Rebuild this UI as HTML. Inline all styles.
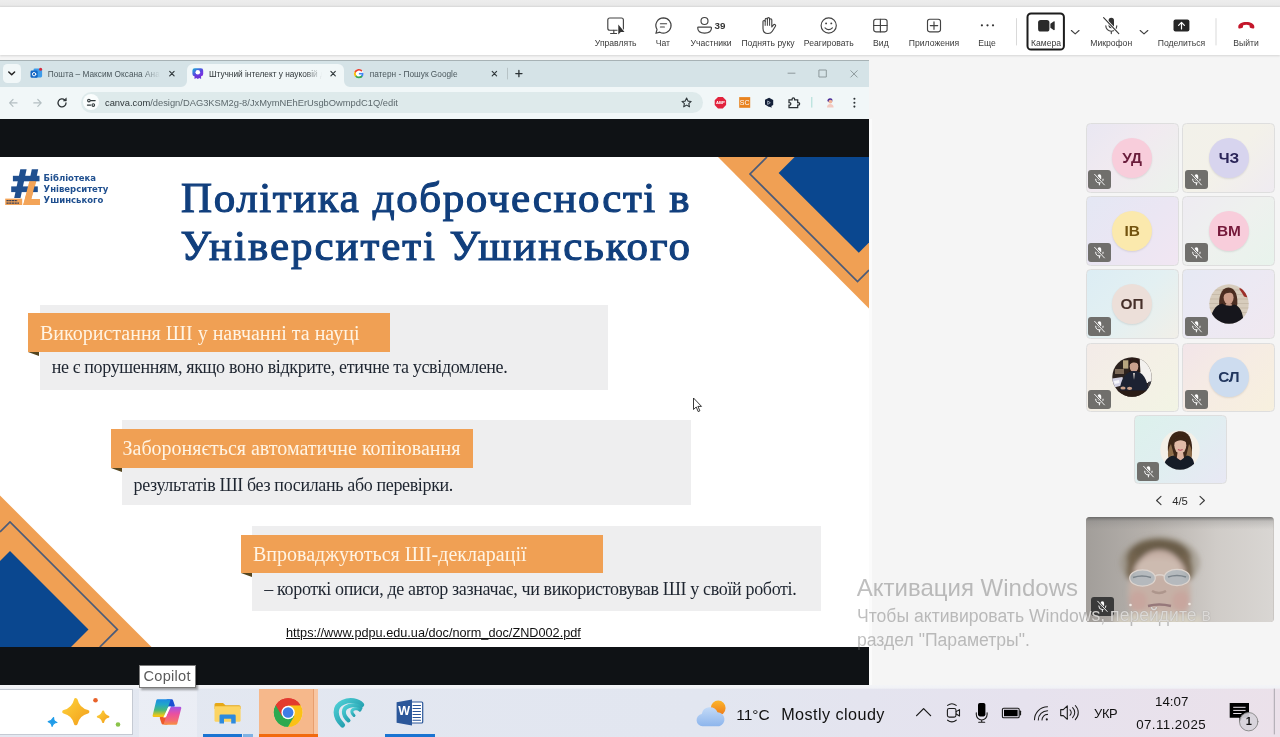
<!DOCTYPE html>
<html lang="uk">
<head>
<meta charset="utf-8">
<title>Meeting</title>
<style>
*{box-sizing:border-box;margin:0;padding:0}
html,body{width:1280px;height:737px;overflow:hidden}
body{position:relative;background:#f5f5f5;will-change:transform;font-family:"Liberation Sans",sans-serif;color:#242424}
.abs{position:absolute}
/* top strips */
#strip0{left:0;top:0;width:1280px;height:7.500px;background:linear-gradient(180deg,#ededed 0,#e9e9e9 5px,#dddddd 6.500px,#ececec 7.500px)}
#tbar{left:0;top:7px;width:1280px;height:47.500px;background:#fff;box-shadow:0 1px 2px rgba(0,0,0,.13)}
.tb{position:absolute;top:29px;font-size:8.6px;color:#3a3a3a;white-space:nowrap;transform:translateX(-50%);line-height:14px}
.ti{position:absolute;top:13px;width:24px;height:24px;transform:translateX(-50%)}
/* browser */
#win{left:0;top:60px;width:869px;height:625px;background:#0f1215;overflow:hidden}
#tabs{left:0;top:0;width:869px;height:27px;background:#d5e3e7}
#nav{left:0;top:27px;width:869px;height:32px;background:#f1f7f8}
#slide{left:0;top:97px;width:869px;height:490px;background:#fff;overflow:hidden;font-family:"Liberation Serif",serif}
/* taskbar */
#task{left:0;top:685px;width:1280px;height:52px;background:linear-gradient(90deg,#e3e8f1 0%,#e2e6f0 55%,#e6e2ee 80%,#ebe1ea 100%)}

.ttl{font-weight:normal;-webkit-text-stroke:1.150px #113f7d;font-size:43px;line-height:50px;color:#113f7d;white-space:nowrap}
.lg{font-family:"DejaVu Sans","Liberation Sans",sans-serif;font-weight:bold;font-size:8.500px;line-height:11px;color:#1f4f8f;white-space:nowrap}
.box{background:#eeeeef}
.ban{background:#f0a054;color:#fff4e4;font-size:20px;line-height:39px;padding-left:12px;white-space:nowrap}
.fold{width:0;height:0;border-style:solid;border-width:0 11.500px 4.500px 0;border-color:transparent #54451f transparent transparent}
.par{font-size:18px;letter-spacing:-0.35px;line-height:22px;color:#1e2530;white-space:nowrap}
.tt{top:7.900px;font-size:8.300px;line-height:12px;white-space:nowrap;overflow:hidden;-webkit-mask-image:linear-gradient(90deg,#000 85%,transparent 100%);mask-image:linear-gradient(90deg,#000 85%,transparent 100%)}
.tile{position:absolute;width:93px;height:69.600px;border-radius:4.500px;border:1px solid #dedede;overflow:hidden}
.av{position:absolute;left:25.600px;top:13.600px;width:40px;height:40px;border-radius:20px;font-weight:bold;font-size:15.400px;line-height:40px;text-align:center;box-shadow:0 1px 2px rgba(0,0,0,.10)}
.ph{position:absolute;left:25.600px;top:13.600px;width:40px;height:40px}
.mb{position:absolute;left:1.700px;top:46.200px;width:22.600px;height:19px;background:#706f6c;border-radius:3px}
.wm{color:rgba(110,110,110,.44);white-space:nowrap}
.tk{color:#111;white-space:nowrap;line-height:18px}
</style>
</head>
<body>
<div id="strip0" class="abs"></div>
<div id="tbar" class="abs"><!--TBAR-->
<svg class="abs" style="left:0;top:0" width="1280" height="47" viewBox="0 7 1280 47" fill="none" stroke="#424242" stroke-width="1.15" stroke-linecap="round" stroke-linejoin="round">
  <!-- manage -->
  <rect x="607.8" y="18" width="15.6" height="12.2" rx="2"/>
  <path d="M613.8 30.3V33.2M610.6 33.5h6"/>
  <path d="M618.3 24.6v10l2.5-2.6h3.7z" fill="#333" stroke="#fff" stroke-width="1.6" paint-order="stroke"/>
  <!-- chat -->
  <path d="M663.5 17.9a7.6 7.6 0 1 1-3.7 14.25l-3.9 1.15 1.15-3.8a7.6 7.6 0 0 1 6.45-11.6z"/>
  <path d="M660.4 23.7h6.2M660.4 27h4"/>
  <!-- people -->
  <circle cx="704.5" cy="21" r="3.5"/>
  <path d="M698.4 27.1h12.4a.7.7 0 0 1 .7.7c0 3.3-2.9 5.3-6.9 5.3s-6.9-2-6.9-5.3a.7.7 0 0 1 .7-.7z"/>
  <!-- hand -->
  <path d="M763 27.5V21.6a1.1 1.1 0 0 1 2.2 0V19.4a1.1 1.1 0 0 1 2.2 0V18.7a1.1 1.1 0 0 1 2.2 0v1.2a1.1 1.1 0 0 1 2.2 0V27l1.7-2.1a1.15 1.15 0 0 1 1.9 1.3l-3.1 5c-1 1.6-2.5 2.3-4.3 2.3c-3 0-5-2-5-5z"/>
  <path d="M765.2 21.6V25.4M767.4 19.4V25.4M769.6 19.9V25.4" stroke-width="1"/>
  <!-- smile -->
  <circle cx="828.7" cy="25.5" r="7.6"/>
  <circle cx="826.1" cy="23.4" r=".95" fill="#424242" stroke="none"/>
  <circle cx="831.3" cy="23.4" r=".95" fill="#424242" stroke="none"/>
  <path d="M825 27.8q3.7 3.5 7.4 0"/>
  <!-- grid -->
  <rect x="873.7" y="19.2" width="13.4" height="12.6" rx="2.2"/>
  <path d="M880.4 19.2v12.6M873.7 25.5h13.4"/>
  <!-- apps -->
  <rect x="927.5" y="19.2" width="13" height="12.6" rx="2.2"/>
  <path d="M934 21.9v7.4M930.3 25.6h7.4"/>
  <!-- more -->
  <g fill="#333" stroke="none"><circle cx="981.9" cy="25.3" r="1.1"/><circle cx="987.5" cy="25.3" r="1.1"/><circle cx="993" cy="25.3" r="1.1"/></g>
  <!-- separators -->
  <path d="M1016.5 18.6V45M1216 18.6V45" stroke="#d9d9d9" stroke-width="1"/>
  <!-- camera -->
  <rect x="1027.5" y="13.4" width="36.4" height="36.2" rx="3.6" stroke="#1c1c1c" stroke-width="2"/>
  <rect x="1038.1" y="19.9" width="11.3" height="11.6" rx="2.6" fill="#2a2a2a" stroke="none"/>
  <path d="M1050.4 23.7l3.2-2.3a.7.7 0 0 1 1.1.6v7.4a.7.7 0 0 1-1.1.6l-3.2-2.3z" fill="#2a2a2a" stroke="none"/>
  <!-- chevrons -->
  <path d="M1071.4 30.5l3.8 3.4 3.8-3.4M1140.2 30.5l3.8 3.4 3.8-3.4"/>
  <!-- mic off -->
  <rect x="1108.6" y="17.8" width="5.4" height="10.4" rx="2.7" fill="#333" stroke="none"/>
  <path d="M1105.8 25.7a5.5 5.5 0 0 0 11 0M1111.3 31.2V33.6"/>
  <path d="M1103.6 17.6l15.2 16" stroke="#fff" stroke-width="2.8"/>
  <path d="M1103.6 17.6l15.2 16" stroke="#333" stroke-width="1.1"/>
  <!-- share -->
  <rect x="1173.5" y="19.5" width="15.9" height="12" rx="2" fill="#262626" stroke="none"/>
  <path d="M1181.5 22.6V29M1178.6 25.3l2.9-2.9 2.9 2.9" stroke="#fff" stroke-width="1.2"/>
  <!-- leave -->
  <path d="M1238.3 26.6c0-2.8 3.6-4.6 8-4.6s8 1.8 8 4.6v.8c0 .8-.7 1.3-1.5 1.1l-2.2-.5c-.6-.15-1-.7-1-1.3v-1.3c-1-.45-2.1-.6-3.3-.6s-2.3.15-3.3.6v1.3c0 .6-.4 1.15-1 1.3l-2.2.5c-.8.2-1.5-.3-1.5-1.100z" fill="#c4162a" stroke="none"/>
</svg>
<span class="tb" style="left:719.900px;top:11.800px;font-weight:bold;font-size:9.800px;color:#333">39</span>
<span class="tb" id="l1" style="left:615.7px">Управлять</span>
<span class="tb" id="l2" style="left:662.9px">Чат</span>
<span class="tb" id="l3" style="left:711px">Участники</span>
<span class="tb" id="l4" style="left:768px">Поднять руку</span>
<span class="tb" id="l5" style="left:828.8px">Реагировать</span>
<span class="tb" id="l6" style="left:880.9px">Вид</span>
<span class="tb" id="l7" style="left:934px">Приложения</span>
<span class="tb" id="l8" style="left:987px">Еще</span>
<span class="tb" id="l9" style="left:1046.1px">Камера</span>
<span class="tb" id="l10" style="left:1111.2px">Микрофон</span>
<span class="tb" id="l11" style="left:1181.5px">Поделиться</span>
<span class="tb" id="l12" style="left:1246px">Выйти</span>
<!--/TBAR--></div>

<div id="win" class="abs">
  <div id="tabs" class="abs"><!--TABS-->
<div class="abs" style="left:0;top:0;width:869px;height:1px;background:#a7b2b5"></div>
<div class="abs" style="left:3.4px;top:4.3px;width:17.2px;height:18.7px;border-radius:4.5px;background:#f1f7f8"></div>
<!-- active tab -->
<div class="abs" style="left:187px;top:4.3px;width:157px;height:23px;border-radius:6px 6px 0 0;background:#f1f7f8"></div>
<svg class="abs" style="left:0;top:0" width="869" height="27" viewBox="0 60 869 27" fill="none" stroke-linecap="round" stroke-linejoin="round">
  <path d="M181 87a6 6 0 0 0 6-6v6zM350 87a6 6 0 0 1-6-6v6z" fill="#f1f7f8"/>
  <path d="M8.800 72l2.9 2.800 2.900-2.800" stroke="#222" stroke-width="1.5"/>
  <!-- tab1 favicon -->
  <rect x="33.5" y="68.6" width="8.600" height="8.800" rx="1.3" fill="#3d9be9"/>
  <rect x="30.5" y="70.6" width="7.200" height="7.200" rx="1.4" fill="#1266c4"/>
  <circle cx="34.1" cy="74.2" r="1.7" stroke="#fff" stroke-width="1"/>
  <circle cx="40.6" cy="69.2" r="1.5" fill="#d6293a"/>
  <!-- close x -->
  <g stroke="#30383b" stroke-width="1.15"><path d="M169.700 71.300l4.400 4.500M174.100 71.300l-4.400 4.500M330.900 71.300l4.400 4.500M335.300 71.300l-4.400 4.500M492.200 71.300l4.400 4.500M496.600 71.300l-4.400 4.500"/></g>
  <!-- tab2 favicon -->
  <defs><linearGradient id="cv" x1="0" y1="0" x2="1" y2="1"><stop offset="0" stop-color="#18b4d8"/><stop offset=".55" stop-color="#5a46e0"/><stop offset="1" stop-color="#8a2be2"/></linearGradient></defs>
  <rect x="192.400" y="68.300" width="10.800" height="8" rx="2.400" fill="url(#cv)"/>
  <path d="M194.500 75.500v3.600l1.800-1.100 1.500 1.100 1.500-1.100 1.800 1.100v-3.600z" fill="#6a35d8"/>
  <circle cx="197.800" cy="72.300" r="2.300" fill="#fff"/>
  <!-- google G -->
  <circle cx="358.700" cy="73.600" r="4.700" fill="#fff"/>
  <path d="M362.700 73.700a4 4 0 0 1-1.300 2.900" stroke="#4285f4" stroke-width="1.700"/>
  <path d="M361.500 76.500a4 4 0 0 1-5.900-.8" stroke="#34a853" stroke-width="1.700"/>
  <path d="M355.500 75.700a4 4 0 0 1 0-4.200" stroke="#fbbc05" stroke-width="1.700"/>
  <path d="M355.500 71.500a4 4 0 0 1 5.900-.8" stroke="#ea4335" stroke-width="1.700"/>
  <path d="M358.900 73.700h3.800" stroke="#4285f4" stroke-width="1.600" stroke-linecap="butt"/>
  <!-- sep + plus -->
  <path d="M507.500 68.200v10.800" stroke="#b7c3c6" stroke-width="1"/>
  <path d="M515.800 73.600h6.200M518.900 70.500v6.200" stroke="#2c3336" stroke-width="1.300"/>
  <!-- window controls -->
  <g stroke="#8d999c" stroke-width="1"><path d="M788 73.200h7"/><rect x="819.300" y="70" width="7" height="7"/><path d="M850.800 70.700l6.400 6.400M857.200 70.700l-6.400 6.400"/></g>
</svg>
<span id="tt1" class="abs tt" style="left:47.700px;width:112px;color:#4b585d">Пошта – Максим Оксана Анатол</span>
<span id="tt2" class="abs tt" style="left:208.900px;width:113px;color:#2e3538">Штучний інтелект у науковій ді</span>
<span id="tt3" class="abs tt" style="left:369.700px;width:100px;color:#4b585d">патерн - Пошук Google</span>
<!--/TABS--></div>
  <div id="nav" class="abs"><!--NAV-->
<div class="abs" style="left:80.500px;top:4.500px;width:622px;height:21.500px;border-radius:11px;background:#deeaeb"></div>
<div class="abs" style="left:83.400px;top:7.300px;width:16px;height:16px;border-radius:8px;background:#fafdfd"></div>
<svg class="abs" style="left:0;top:0" width="869" height="32" viewBox="0 87 869 32" fill="none" stroke-linecap="round" stroke-linejoin="round">
  <g stroke="#b4bfc2" stroke-width="1.200"><path d="M17 102.900H9.800M13 99.500l-3.400 3.400 3.400 3.400"/><path d="M33.800 102.900H41M37.800 99.500l3.400 3.400-3.400 3.400"/></g>
  <path d="M66 102.900a4 4 0 1 1-1.300-2.950" stroke="#2b3134" stroke-width="1.300"/>
  <path d="M66.300 98.300v2.600h-2.600z" fill="#2b3134" stroke="#2b3134" stroke-width=".6"/>
  <!-- tune icon -->
  <g stroke="#30383b" stroke-width="1.100"><path d="M90.600 100.600h4.600M87.400 105.100h3.200"/><circle cx="88.900" cy="100.600" r="1.300"/><circle cx="93.300" cy="105.100" r="1.300"/></g>
  <!-- star -->
  <path d="M686.600 98.100l1.400 3 3.200.35-2.400 2.150.7 3.200-2.900-1.700-2.900 1.700.7-3.200-2.400-2.150 3.200-.35z" stroke="#30383b" stroke-width="1.100"/>
  <!-- ABP -->
  <path d="M718 97h4.800l3.300 3.300v4.800l-3.300 3.300H718l-3.300-3.300v-4.800z" fill="#e2233d"/>
  <!-- SC -->
  <rect x="739.200" y="97.100" width="11" height="10.700" fill="#e8831f"/>
  <!-- hex -->
  <path d="M769.100 97.700l4.100 2.400v4.800l-1.800 1.100.3 1.700-2-1-.6.300-4.100-2.400v-4.800z" fill="#132039"/>
  <path d="M768 101.200l2.300 1.500-2.300 1.500z" stroke="#cfd8e6" stroke-width=".7"/>
  <!-- puzzle -->
  <path d="M789 99.800h3.100v-.7a1.250 1.250 0 0 1 2.500 0v.7h3.100v2.700h.7a1.250 1.250 0 0 1 0 2.500h-.7v2.600h-8.700v-2.600h.6a1.250 1.250 0 0 0 0-2.500h-.6z" stroke="#2b3134" stroke-width="1.250" stroke-linejoin="miter"/>
  <path d="M811.800 97.400v9.800" stroke="#a9dcd5" stroke-width="1"/>
  <!-- avatar -->
  <path d="M827.300 100.500a2.800 2.800 0 0 1 5.200-.8l-.4 2.400h-4z" fill="#4b2f9a"/>
  <circle cx="830.400" cy="101.600" r="1.900" fill="#f0b49a"/>
  <path d="M827 107.500c0-2.300 1.300-3.500 3.300-3.500s3.300 1.200 3.300 3.500z" fill="#f3c9c0"/>
  <!-- kebab -->
  <g fill="#2b3134"><circle cx="854.400" cy="98.800" r="1.050"/><circle cx="854.400" cy="102.700" r="1.050"/><circle cx="854.400" cy="106.600" r="1.050"/></g>
</svg>
<span class="abs" style="left:714.700px;top:12.700px;width:11.400px;text-align:center;font-size:4.200px;line-height:6px;font-weight:bold;color:#fff;letter-spacing:-.1px">ABP</span>
<span class="abs" style="left:739.200px;top:11.300px;width:11px;text-align:center;font-size:7px;line-height:9px;color:#fff">SC</span>
<span id="url" class="abs" style="left:105px;top:9.500px;font-size:9.350px;line-height:13px;color:#30383b;white-space:nowrap">canva.com<span style="color:#5d696d">/design/DAG3KSM2g-8/JxMymNEhErUsgbOwmpdC1Q/edit</span></span>
<!--/NAV--></div>
  <div id="slide" class="abs"><!--SLIDE-->
<svg class="abs" style="left:0;top:0" width="869" height="490" viewBox="0 0 869 490">
  <polygon points="718,0 869,0 869,151.5" fill="#f0a054"/>
  <polygon points="794.6,0 869,0 869,85.6 858.8,95.8 778.6,16" fill="#0a478f"/>
  <polyline points="767,0 750,17 857.5,124.5 869,113" fill="none" stroke="#4a5b7a" stroke-width="1.700"/>
  <polygon points="0,338.5 151.5,490 0,490" fill="#f0a054"/>
  <polygon points="0,404 10,394 88.5,472.5 71,490 0,490" fill="#0a478f"/>
  <polyline points="0,375 10,365 117.4,472.4 99.8,490" fill="none" stroke="#4a5b7a" stroke-width="1.700"/>
</svg>
<!-- logo -->
<div id="logo" class="abs" style="left:0;top:0">
  <svg class="abs" style="left:0;top:0" width="46" height="54" viewBox="0 157 46 54">
    <polygon points="31.400,177 37.600,177 31.300,199 39.900,199 39.900,205 23.200,205 " fill="#f3a458"/>
    <g fill="#1f4f8f">
      <polygon points="20.300,169.300 26.600,169.300 20.500,198 14.200,198"/>
      <polygon points="31.800,169.300 38.200,169.300 36.600,177 30.200,177"/>
      <rect x="12.900" y="175.800" width="26.600" height="5.500"/>
      <rect x="11.200" y="186.400" width="26.600" height="5.700"/>
    </g>
    <polygon points="30.200,177 36.600,177 35.700,181.300 29.300,181.300" fill="#1f4f8f"/>
    <polygon points="29.300,181.300 35.700,181.300 31.300,199 39.900,199 39.900,205 23.200,205" fill="#f3a458"/>
    <rect x="27" y="186.400" width="10.800" height="5.700" fill="#1f4f8f" opacity=".0"/>
    <rect x="5.200" y="198.600" width="17" height="6.400" fill="#f3a458"/>
    <path d="M6.500 200.600h11M6.500 203.100h12.500" stroke="#3a3f55" stroke-width="1.100" stroke-dasharray="2.200 .5"/>
  </svg>
  <div id="lg1" class="abs lg" style="left:43.600px;top:15.500px">Бібліотека</div>
  <div id="lg2" class="abs lg" style="left:43.600px;top:26.700px">Університету</div>
  <div id="lg3" class="abs lg" style="left:43.600px;top:37.500px">Ушинського</div>
</div>
<div id="t1" class="abs ttl" style="left:181px;top:15.500px;letter-spacing:1.6px">Політика доброчесності в</div>
<div id="t2" class="abs ttl" style="left:180.500px;top:63.500px;letter-spacing:1.95px">Університеті Ушинського</div>

<div class="abs box" style="left:39.5px;top:147.5px;width:568.5px;height:85px"></div>
<div class="abs fold" style="left:28px;top:195px"></div>
<div class="abs ban" style="left:28px;top:155.5px;width:362px;height:39.5px"><span id="b1" style="position:relative;top:1px">Використання ШІ у навчанні та науці</span></div>
<div id="p1" class="abs par" style="left:51.7px;top:199px">не є порушенням, якщо воно відкрите, етичне та усвідомлене.</div>

<div class="abs box" style="left:122px;top:263px;width:568.5px;height:85px"></div>
<div class="abs fold" style="left:110.5px;top:310.5px"></div>
<div class="abs ban" style="left:110.5px;top:271.5px;width:362px;height:39px"><span id="b2">Забороняється автоматичне копіювання</span></div>
<div id="p2" class="abs par" style="left:133.500px;top:316.500px">результатів ШІ без посилань або перевірки.</div>

<div class="abs box" style="left:251.5px;top:368.5px;width:569px;height:85px"></div>
<div class="abs fold" style="left:241px;top:416px"></div>
<div class="abs ban" style="left:241px;top:377.5px;width:361.5px;height:38.5px"><span id="b3">Впроваджуються ШІ-декларації</span></div>
<div id="p3" class="abs par" style="left:264.3px;top:421px">– короткі описи, де автор зазначає, чи використовував ШІ у своїй роботі.</div>

<div id="lnk" class="abs" style="left:286px;top:468px;font-family:'Liberation Sans',sans-serif;font-size:12.7px;color:#111;text-decoration:underline;white-space:nowrap;line-height:16px">https://www.pdpu.edu.ua/doc/norm_doc/ZND002.pdf</div>
<!--/SLIDE--></div>
</div>

<div class="abs" style="left:869px;top:119px;width:2.500px;height:566px;background:#fbfbfb"></div>
<div id="panel"><!--PANEL-->
<svg width="0" height="0" style="position:absolute"><defs>
<symbol id="mo" viewBox="0 0 22 19"><g fill="none" stroke="#fff" stroke-linecap="round" stroke-width="1"><rect x="9.300" y="4.300" width="3.600" height="6.600" rx="1.800" fill="#fff" stroke="none"/><path d="M7.400 9.200a3.700 3.700 0 0 0 7.400 0M11.100 13v1.900"/><path d="M6.300 4.300l9.800 10.600" stroke="#706f6c" stroke-width="2.400"/><path d="M6.300 4.300l9.800 10.600" stroke-width=".9"/></g></symbol>
<clipPath id="cc"><circle cx="20" cy="20" r="19.700"/></clipPath>
<filter id="fb1" x="-20%" y="-20%" width="140%" height="140%"><feGaussianBlur stdDeviation=".7"/></filter>
<filter id="fb2" x="-20%" y="-20%" width="140%" height="140%"><feGaussianBlur stdDeviation="1.600"/></filter>
<filter id="fb3" x="-20%" y="-20%" width="140%" height="140%"><feGaussianBlur stdDeviation="2.400"/></filter>
</defs></svg>
<div class="tile" style="left:1085.500px;top:123.200px;background:linear-gradient(135deg,#e9e7f2 0%,#f1eaf0 45%,#ecf2ec 100%)"><div class="av" style="background:#f8cddb;color:#6a1d3b">УД</div><svg class="mb"><use href="#mo"/></svg></div>
<div class="tile" style="left:1182.300px;top:123.200px;background:linear-gradient(135deg,#f2f1ea 0%,#f3f1e9 50%,#efebf1 100%)"><div class="av" style="background:#d7d4ee;color:#2a2458">ЧЗ</div><svg class="mb"><use href="#mo"/></svg></div>
<div class="tile" style="left:1085.500px;top:196.300px;background:linear-gradient(135deg,#e4e7f4 0%,#ebe6f3 55%,#f1e6f2 100%)"><div class="av" style="background:#fbe9ad;color:#73540f">ІВ</div><svg class="mb"><use href="#mo"/></svg></div>
<div class="tile" style="left:1182.300px;top:196.300px;background:linear-gradient(135deg,#eeebf2 0%,#eef1ee 50%,#e8f3ec 100%)"><div class="av" style="background:#f8cddb;color:#75193a">ВМ</div><svg class="mb"><use href="#mo"/></svg></div>
<div class="tile" style="left:1085.500px;top:269.400px;background:linear-gradient(135deg,#dcedf4 0%,#e3f0f2 50%,#f1efe8 100%)"><div class="av" style="background:#ecdfd9;color:#46302a">ОП</div><svg class="mb"><use href="#mo"/></svg></div>
<div class="tile" style="left:1182.300px;top:269.400px;background:linear-gradient(135deg,#e6e9f4 0%,#ece9f3 50%,#f0e8f0 100%)">
  <svg class="ph" viewBox="0 0 40 40"><g clip-path="url(#cc)"><rect width="40" height="40" fill="#d7ccbc"/><g stroke="#c0b3a2" stroke-width=".7"><path d="M0 6h40M0 10.500h40M0 15h40M0 19.500h40M0 24h40M0 28.500h40"/></g><g filter="url(#fb1)"><path d="M30 4.500l3.500-.5 3.500 4.500 1.500 5-3.500-1-2-3.500z" fill="#9c2f2b"/><path d="M10.500 24c-1.500-10 1.500-20.500 9-20.500 7 0 10 9 8.500 19.500l-3 3.500H13z" fill="#4b2d20"/><ellipse cx="19.600" cy="13.600" rx="5" ry="6.600" fill="#cd9f8b"/><path d="M14.800 11c.8-4 3-5.500 5.300-5.500 2 0 4 1.300 4.700 5-2-2.300-7-2.600-10 .5z" fill="#4b2d20"/><path d="M17 19.500h5.500l1 4h-7.500z" fill="#c59a88"/><path d="M1.500 40c0-12 5-19.500 12-20.500 3 2.500 8.500 3 11.500 1 6 1.500 9.500 8 9.500 19.500z" fill="#18181c"/></g></g></svg>
  <svg class="mb"><use href="#mo"/></svg></div>
<div class="tile" style="left:1085.500px;top:342.500px;background:linear-gradient(135deg,#f3ebe8 0%,#f4f0e6 50%,#f2f4e4 100%)">
  <svg class="ph" viewBox="0 0 40 40"><g clip-path="url(#cc)"><rect width="40" height="40" fill="#2c221e"/><g filter="url(#fb1)"><rect x="27.500" y="0" width="13" height="26" fill="#f3f1ee"/><rect x="11" y="3.300" width="5.300" height="8.300" fill="#b8a57f"/><rect x="3" y="12" width="9" height="5" fill="#7d6a58"/><path d="M0 21.500l10.500-1.500 1.500 8-12 3z" fill="#d4d3e4"/><path d="M2 24l5-1 .5 3-5 1z" fill="#f6f6fa"/><path d="M17 1.500h10.500l1 14H17z" fill="#2a1a16"/><ellipse cx="22" cy="9.500" rx="4.300" ry="5.800" fill="#caa18d"/><path d="M17.400 7.500c0-4 2-6 4.800-6 2.700 0 4.800 2 4.500 6-1.800-2.600-6.500-2.800-9.300 0z" fill="#2a1a16"/><path d="M7.500 35c1-13 6-21 14.500-21s14 8 14 21z" fill="#1c2230"/><path d="M21 16l1 7 1-7z" fill="#c9c4c0"/><path d="M0 33.500h36v7H0z" fill="#2a1c18"/><ellipse cx="11" cy="31" rx="2.600" ry="1.600" fill="#c9a08a"/><ellipse cx="17.600" cy="31.300" rx="2.600" ry="1.600" fill="#c9a08a"/><path d="M36 25l4-1v9l-4 1z" fill="#3a3a42"/></g></g></svg>
  <svg class="mb"><use href="#mo"/></svg></div>
<div class="tile" style="left:1182.300px;top:342.500px;background:linear-gradient(135deg,#f2e5e9 0%,#f6ece3 50%,#f7f0de 100%)"><div class="av" style="background:#cddcef;color:#21365e">СЛ</div><svg class="mb"><use href="#mo"/></svg></div>
<div class="tile" style="left:1133.900px;top:415px;height:68.700px;background:linear-gradient(135deg,#dcf1ec 0%,#e0eef0 50%,#e8e8f4 100%)">
  <svg class="ph" viewBox="0 0 40 40"><g clip-path="url(#cc)"><rect width="40" height="40" fill="#f4f0e8"/><g filter="url(#fb1)"><path d="M9 27c-2.500-9-1-20 5-24 5-3 12.500-2 15.500 3.500 3.500 7 3 15 1 23l-4 4H12z" fill="#3c2519"/><path d="M8.500 28c-1.500-6 .5-11 2.500-14l3.500 13zM31.500 28c1.500-6-.5-11-2.500-14l-3 13z" fill="#8d6c49"/><path d="M10 30c0-3 1.500-5 3-6l1.500 6zM30.500 31c0-3-1.500-5-3-6l-1 6z" fill="#a88560"/><ellipse cx="20.300" cy="15.300" rx="6" ry="8.400" fill="#e2baa6"/><path d="M14.300 13c.5-5 3-7.500 6.300-7.500 3 0 5.500 2.500 5.700 7-2.500-3-8.500-3.500-12 .5z" fill="#3c2519"/><path d="M18 19.600q2.300 1.300 4.600 0" stroke="#b5485a" stroke-width="1.100" fill="none"/><path d="M17.500 22.500h5.500l1.500 8h-8z" fill="#dcb29e"/><path d="M3.500 40c0-9 4-13.500 10-14.500l7 5 6.500-5c6 1 7.500 5.500 7.500 14.500z" fill="#141a26"/></g></g></svg>
  <svg class="mb"><use href="#mo"/></svg></div>
<!-- pager -->
<svg class="abs" style="left:1150px;top:492px" width="60" height="17" viewBox="1150 492 60 17" fill="none" stroke="#3a3a3a" stroke-width="1.100" stroke-linecap="round" stroke-linejoin="round"><path d="M1161 496.300l-4.400 4.200 4.400 4.200M1200 496.300l4.400 4.200-4.400 4.200"/></svg>
<span id="pg" class="abs" style="left:1172.200px;top:493.500px;font-size:11.300px;line-height:14px;color:#2b2b2b">4/5</span>
<!-- self video -->
<div class="abs" style="left:1086.200px;top:516.800px;width:187.600px;height:105.600px;border-radius:4px;overflow:hidden;background:#b5b0ab;z-index:2">
  <svg class="abs" style="left:0;top:0" width="187.600" height="105.600" viewBox="0 0 187.600 105.600">
    <defs><linearGradient id="wl" x1="0" y1="0" x2="1" y2="0"><stop offset="0" stop-color="#a29e9a"/><stop offset=".35" stop-color="#b7b2ad"/><stop offset=".7" stop-color="#d0ccc8"/><stop offset="1" stop-color="#d9d6d3"/></linearGradient>
    <linearGradient id="wt" x1="0" y1="0" x2="0" y2="1"><stop offset="0" stop-color="#555" stop-opacity=".75"/><stop offset=".04" stop-color="#777" stop-opacity=".25"/><stop offset=".12" stop-color="#888" stop-opacity="0"/></linearGradient></defs>
    <rect width="187.600" height="105.600" fill="url(#wl)"/>
    <g filter="url(#fb3)">
      <ellipse cx="74" cy="46" rx="40" ry="27" fill="#8f8574" opacity=".5"/>
      <ellipse cx="73" cy="42" rx="32" ry="20" fill="#6b5d48"/>
      <ellipse cx="73.500" cy="76" rx="31" ry="43" fill="#c6b0a6"/>
      <ellipse cx="72" cy="50" rx="22" ry="9" fill="#cdbbb0"/>
      <path d="M42 62q-4-15 5-27l5 4q-6 10-4 23zM105 62q4-15-5-27l-5 4q6 10 4 23z" fill="#74654f"/>
      <ellipse cx="52" cy="84" rx="9" ry="10" fill="#c9a29b" opacity=".7"/>
      <ellipse cx="95" cy="84" rx="9" ry="10" fill="#c9a29b" opacity=".7"/>
      <ellipse cx="72" cy="103" rx="46" ry="7" fill="#d6d0c2"/>
    </g>
    <g filter="url(#fb1)">
      <ellipse cx="56.500" cy="61" rx="12.800" ry="8.200" fill="#b0bbc3" fill-opacity=".8" stroke="#ded5cf" stroke-width="1.200"/>
      <ellipse cx="91" cy="60.500" rx="12.800" ry="8.200" fill="#b0bbc3" fill-opacity=".8" stroke="#ded5cf" stroke-width="1.200"/>
      <path d="M69 59q4.800-2.500 9.500 0" stroke="#ddd3cc" stroke-width="1.500" fill="none"/>
      <path d="M47 60.500q9-3 18 0M82 60q9-3 18 0" stroke="#6f7880" stroke-width="1.600" fill="none" opacity=".8"/>
      <path d="M66 74q7 4 14 0" stroke="#a88f86" stroke-width="2.400" fill="none" opacity=".8"/>
      <path d="M62 89q11-3 23 0" stroke="#96787a" stroke-width="2.400" fill="none"/>
      <circle cx="44.500" cy="88" r="1.300" fill="#efe9e2"/><circle cx="103.500" cy="87" r="1.300" fill="#efe9e2"/>
    </g>
    <rect width="187.600" height="105.600" fill="url(#wt)"/>
  </svg>
  <svg class="abs" style="left:5.200px;top:80.300px;background:#3a3a3a;border-radius:3px" width="22.500" height="18.500" viewBox="0 0 22 19"><g fill="none" stroke="#fff" stroke-linecap="round" stroke-width="1"><rect x="9.300" y="4.300" width="3.600" height="6.600" rx="1.800" fill="#fff" stroke="none"/><path d="M7.400 9.200a3.700 3.700 0 0 0 7.400 0M11.100 13v1.900"/><path d="M6.300 4.300l9.800 10.600" stroke="#3a3a3a" stroke-width="2.400"/><path d="M6.300 4.300l9.800 10.600" stroke-width=".9"/></g></svg>
<div class="abs" style="left:-229.200px;top:86.700px;font-size:17.600px;line-height:24px;white-space:nowrap;color:rgba(226,224,222,.9);text-shadow:0 0 1px rgba(90,90,90,.5)">Чтобы активировать Windows, перейдите в</div>
</div>
<!-- activation watermark -->
<div id="wm1" class="abs wm" style="left:856.800px;top:573.500px;font-size:24px;line-height:28px">Активация Windows</div>
<div id="wm2" class="abs wm" style="left:857px;top:603.500px;font-size:17.600px;line-height:24px">Чтобы активировать Windows, перейдите в</div>
<div id="wm3" class="abs wm" style="left:857px;top:627.500px;font-size:17.600px;line-height:24px">раздел "Параметры".</div>
<!--/PANEL--></div>

<div id="task" class="abs"><!--TASK-->
<div class="abs" style="left:0;top:0;width:1280px;height:3.500px;background:linear-gradient(180deg,#f3f4f7 0,#f1f2f6 70%,rgba(240,242,246,.4) 100%)"></div>
<div class="abs" style="left:0;top:4.400px;width:133px;height:45.500px;background:#fff;border:1px solid #c5cad3;border-left:none"></div>
<div class="abs" style="left:138.600px;top:2px;width:58.500px;height:50px;background:rgba(255,255,255,.28)"></div>
<div class="abs" style="left:259.400px;top:3.600px;width:54px;height:46px;background:#f6b88b"></div>
<div class="abs" style="left:313.400px;top:3.600px;width:1px;height:46px;background:#e89f6e"></div>
<div class="abs" style="left:314.400px;top:3.600px;width:3.600px;height:46px;background:#f8c6a2"></div>
<div class="abs" style="left:259.400px;top:49.400px;width:58.600px;height:2.600px;background:#f26a0e"></div>
<div class="abs" style="left:203.100px;top:49.400px;width:39.400px;height:2.600px;background:#1a74d2"></div>
<div class="abs" style="left:242.500px;top:49.400px;width:10px;height:2.600px;background:#7fb2e4"></div>
<div class="abs" style="left:385.200px;top:49.400px;width:49.500px;height:2.600px;background:#1a74d2"></div>
<svg class="abs" style="left:0;top:0" width="1280" height="52" viewBox="0 685 1280 52" fill="none" stroke-linecap="round" stroke-linejoin="round">
  <defs>
    <linearGradient id="gd" x1="0" y1="0" x2="1" y2="1"><stop offset="0" stop-color="#fdd03a"/><stop offset="1" stop-color="#f3a01c"/></linearGradient>
    <linearGradient id="cp1" gradientUnits="userSpaceOnUse" x1="0" y1="699" x2="0" y2="717.500"><stop offset="0" stop-color="#1c8ae6"/><stop offset=".3" stop-color="#22a6c8"/><stop offset=".6" stop-color="#49b97a"/><stop offset=".9" stop-color="#f2c714"/><stop offset="1" stop-color="#f5b81a"/></linearGradient>
    <linearGradient id="cp2" gradientUnits="userSpaceOnUse" x1="0" y1="706.500" x2="0" y2="725"><stop offset="0" stop-color="#a255ea"/><stop offset=".4" stop-color="#ea4fa0"/><stop offset=".75" stop-color="#f46a74"/><stop offset="1" stop-color="#f8923c"/></linearGradient>
    <linearGradient id="cl" x1="0" y1="0" x2="0" y2="1"><stop offset="0" stop-color="#c3daf7"/><stop offset="1" stop-color="#8db5ec"/></linearGradient>
    <linearGradient id="sn" x1="0" y1="0" x2="0" y2="1"><stop offset="0" stop-color="#fbb52a"/><stop offset="1" stop-color="#ee7a1a"/></linearGradient>
    <linearGradient id="wv" x1="0" y1="0" x2="1" y2="1"><stop offset="0" stop-color="#4fd0d6"/><stop offset="1" stop-color="#128a9e"/></linearGradient>
  </defs>
  <!-- sparkles -->
  <path d="M75.800 699.900c1.500 6.400 5.400 10.300 11.800 11.800-6.400 1.500-10.300 5.400-11.800 11.800-1.500-6.400-5.400-10.300-11.800-11.800 6.400-1.500 10.300-5.400 11.800-11.800z" fill="url(#gd)" stroke="url(#gd)" stroke-width="3.600" stroke-linejoin="round"/>
  <path d="M103.100 711.500c.7 2.800 2.400 4.500 5.200 5.200-2.800.7-4.500 2.400-5.200 5.200-.7-2.800-2.400-4.500-5.200-5.200 2.800-.7 4.500-2.400 5.200-5.200z" fill="url(#gd)" stroke="url(#gd)" stroke-width="2.200" stroke-linejoin="round"/>
  <path d="M53.600 717.600c-.2 2.700.6 3.900 3.300 4.900-2.700.3-3.900 1.200-4.800 3.900-.3-2.700-1.200-3.900-3.900-4.800 2.700-.3 3.900-1.200 5.400-4z" fill="#209ce9" stroke="#209ce9" stroke-width="1.200"/>
  <circle cx="95.500" cy="700.300" r="2.300" fill="#e8622a"/>
  <circle cx="118" cy="724.500" r="2.300" fill="#8bc34a"/>
  <!-- copilot -->
  <g stroke-linejoin="round">
  <polygon points="167.500,700.400 171.800,700.400 173.600,705.600 166,705.600" fill="#1b4fd2" stroke="#1b4fd2" stroke-width="2.400"/>
  <polygon points="161,718 165.500,718 166.800,723.400 162.800,723.400" fill="#ee5a2a" stroke="#ee5a2a" stroke-width="2.400"/>
  <polygon points="157.600,700.500 169,700.500 163.600,715.800 153.900,715.800" fill="url(#cp1)" stroke="url(#cp1)" stroke-width="2.600"/>
  <polygon points="170.600,708 180,708 176,723.400 165.200,723.400" fill="url(#cp2)" stroke="url(#cp2)" stroke-width="2.600"/>
  <polygon points="168.600,706.600 171,706.600 165.600,717.400 163.300,717.400" fill="#fff"/>
  </g>
  <!-- explorer -->
  <path d="M214.500 704.500a1.500 1.500 0 0 1 1.500-1.500h7l2.500 2.300h13.600a1.500 1.500 0 0 1 1.500 1.500v2.200h-26.100z" fill="#e6a817"/>
  <rect x="214.500" y="706.300" width="26.100" height="15.500" rx="1.400" fill="#fcd462"/>
  <path d="M219.500 723.400v-7.600a1.300 1.300 0 0 1 1.300-1.300h13.600a1.300 1.300 0 0 1 1.300 1.300v7.600h-4.500v-4.600h-7.200v4.600z" fill="#2d8ade"/>
  <!-- chrome -->
  <circle cx="288.100" cy="712.500" r="14.300" fill="#fff"/>
  <path d="M288.100 712.500L275.720 705.350A14.300 14.300 0 0 1 300.480 705.350z" fill="#e33b2e"/>
  <path d="M275.720 705.350A14.300 14.300 0 0 1 300.480 705.350H288.100z" fill="#e33b2e"/>
  <path d="M300.480 705.350A14.300 14.300 0 0 1 288.100 726.800L288.100 712.500z" fill="#fbc116"/>
  <path d="M288.100 726.800A14.300 14.300 0 0 1 275.720 705.350L288.100 712.500z" fill="#2da94f"/>
  <path d="M288.100 712.500l12.380-7.150H288.100z" fill="#e33b2e"/>
  <path d="M294.300 716.100L288.100 726.800a14.300 14.300 0 0 0 12.380-21.450H288.100z" fill="#fbc116"/>
  <path d="M281.900 716.100l-6.180-10.750A14.300 14.300 0 0 0 288.100 726.800l6.200-10.700z" fill="#2da94f"/>
  <path d="M275.720 705.350A14.300 14.300 0 0 1 300.480 705.350H288.100l-6.200 10.750z" fill="#e33b2e"/>
  <circle cx="288.100" cy="712.500" r="6.700" fill="#fff"/>
  <circle cx="288.100" cy="712.500" r="5.300" fill="#3f7de6"/>
  <!-- wave -->
  <g stroke="url(#wv)" fill="none"><path d="M342.500 725C334.500 717 333.500 706.500 343 702.300C350 699.300 358 700.800 361.500 704.800" stroke-width="5.200"/><path d="M348.500 720.500C342 714.500 342.500 708 349 706C354 704.500 358 705.500 360.500 708" stroke-width="4"/><path d="M354 715.500C350.500 712 351.500 709.500 355 708.800C357.500 708.300 359 709 360 710.200" stroke-width="3"/></g>
  <!-- word -->
  <rect x="409" y="702" width="13.700" height="21" rx="1" fill="#fff" stroke="#2b579a" stroke-width="1.200"/>
  <g stroke="#2b579a" stroke-width="1.100"><path d="M413 705.500h7.500M413 708.500h7.500M413 711.500h7.500M413 714.500h7.500M413 717.500h7.500M413 720.300h7.500"/></g>
  <path d="M396.600 702.200l15.400-2.700v26l-15.400-2.700z" fill="#2b579a"/>
  <!-- weather -->
  <circle cx="718.200" cy="708" r="7.400" fill="url(#sn)"/>
  <path d="M702.500 726.300a6.200 6.200 0 0 1-.8-12.300 8.300 8.300 0 0 1 15.800-1.800 7.200 7.200 0 0 1 1.800 14.100z" fill="url(#cl)"/>
  <!-- tray -->
  <g stroke="#1b1b1b" stroke-width="1.300">
    <path d="M916.600 715.600l7-7 7 7"/>
    <rect x="947.400" y="708.500" width="8.600" height="8.600" rx="1.800" stroke-width="1.100"/>
    <path d="M956.200 711.600l3.300-2v6.400l-3.300-2M947.600 705.400a7 7 0 0 1 8.600 0M947.600 720.200a7 7 0 0 0 8.600 0" stroke-width="1.100"/>
    <rect x="978" y="703" width="7.400" height="13.400" rx="1.800" fill="#000" stroke="none"/>
    <path d="M976.300 712.800v1.800a5.400 5.400 0 0 0 10.800 0v-1.800M981.700 720v2.200M978.700 722.300h6" stroke-width="1.100"/>
    <rect x="1002.400" y="708.200" width="16.800" height="9.600" rx="1.300" stroke-width="1.100"/>
    <rect x="1004" y="709.800" width="13.600" height="6.400" fill="#000" stroke="none"/>
    <path d="M1020.400 711.300v3.400" stroke-width="1.400"/>
    <path d="M1034.500 719.800a13 13 0 0 1 13-13M1038.300 719.900a9.200 9.200 0 0 1 9.300-9.200M1042 720a5.500 5.500 0 0 1 5.600-5.600" stroke-width="1.050"/>
    <circle cx="1046.800" cy="719.400" r="1.050" fill="#1b1b1b" stroke="none"/>
    <path d="M1060.700 709.600h2.600l4-3.700v13.400l-4-3.700h-2.600z" stroke-width="1.100"/>
    <path d="M1070 709.900a3.600 3.600 0 0 1 0 5.400M1072.600 707.600a6.900 6.900 0 0 1 0 10M1075.300 705.500a10 10 0 0 1 0 14.200" stroke-width="1.050"/>
  </g>
  <!-- notification -->
  <path d="M1229.700 703h19.300v14.800h-6.400l-3.200 4.700v-4.700h-9.700z" fill="#000"/>
  <path d="M1233.600 707.300h11.600M1233.600 710.400h11.600M1233.600 713.500h7.500" stroke="#e9e1ea" stroke-width="1"/>
  <circle cx="1248.700" cy="721.700" r="9.200" fill="#d6d3da" fill-opacity=".92" stroke="#858585" stroke-width=".9"/>
  <path d="M1274.300 689v45" stroke="#a9a5ad" stroke-width="1"/>
</svg>
<span class="abs" style="left:398.300px;top:18.500px;font-size:12.500px;font-weight:bold;color:#fff;line-height:14px;letter-spacing:-.3px">W</span>
<span id="w1" class="abs tk" style="left:736.200px;top:20.700px;font-size:15.500px">11°C</span>
<span id="w2" class="abs tk" style="left:781.200px;top:20.300px;font-size:16.200px;letter-spacing:.43px">Mostly cloudy</span>
<span id="k1" class="abs tk" style="left:1094px;top:19.500px;font-size:12.900px;letter-spacing:-.3px">УКР</span>
<span id="k2" class="abs tk" style="left:1155px;top:7.700px;font-size:13.300px">14:07</span>
<span id="k3" class="abs tk" style="left:1136.200px;top:30.800px;font-size:13.300px;letter-spacing:.43px">07.11.2025</span>
<span class="abs tk" style="left:1245.800px;top:28.500px;font-size:11px;font-weight:bold;line-height:14px">1</span>
<!--/TASK--></div>
<!--TIP-->
<div class="abs" style="left:138.600px;top:665px;width:57.200px;height:23px;background:#fff;border:1px solid #7a7a7a;box-shadow:1.500px 1.500px 2px rgba(0,0,0,.35)"></div>
<span id="tip" class="abs" style="left:143.500px;top:667.300px;font-size:14.600px;letter-spacing:.26px;line-height:18px;color:#5a5a5a;white-space:nowrap">Copilot</span>
<!-- mouse cursor -->
<svg class="abs" style="left:692px;top:397px" width="12" height="17" viewBox="0 0 12 17"><path d="M1.500 1v11.500l2.700-2.500 2 4.600 1.700-.8-2-4.400h3.600z" fill="#fff" stroke="#222" stroke-width=".9" stroke-linejoin="round"/></svg>
<!--/TIP-->
</body>
</html>
